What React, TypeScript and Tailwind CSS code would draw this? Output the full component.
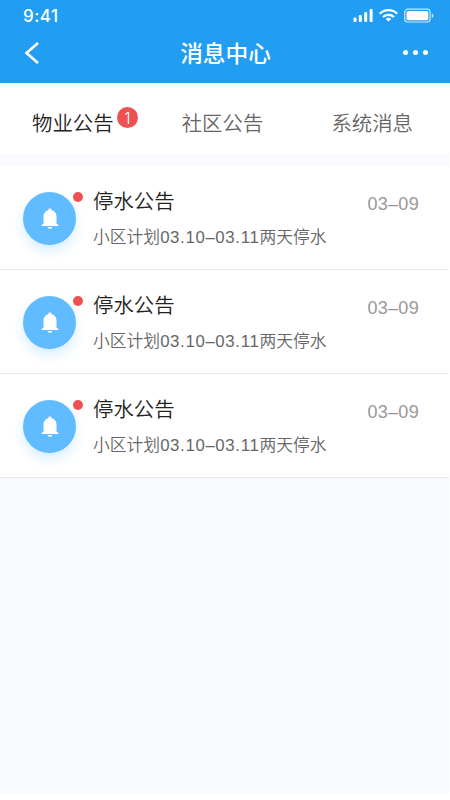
import { useState } from 'react';

const tabs = [
  { label: '物业公告', count: 1 },
  { label: '社区公告', count: 0 },
  { label: '系统消息', count: 0 }
];

const notices = [
  { id: 1, title: '停水公告', place: '小区计划', range: '03.10–03.11', rest: '两天停水', date: '03–09' },
  { id: 2, title: '停水公告', place: '小区计划', range: '03.10–03.11', rest: '两天停水', date: '03–09' },
  { id: 3, title: '停水公告', place: '小区计划', range: '03.10–03.11', rest: '两天停水', date: '03–09' }
];

function StatusIcons() {
  return (
    <svg width="82" height="16" viewBox="0 0 82 16" fill="white">
      <rect x="0.5" y="9.5" width="3" height="4.5" rx="1" />
      <rect x="5.8" y="7" width="3" height="7" rx="1" />
      <rect x="11.2" y="4" width="3" height="10" rx="1" />
      <rect x="16.6" y="1" width="3" height="13" rx="1" />
      <g fill="none" stroke="white" strokeWidth="2.1">
        <path d="M26.8 5.7a12.4 12.4 0 0 1 17.4 0" />
        <path d="M30 9.1a8 8 0 0 1 11 0" />
      </g>
      <path d="M35.5 13.6l-2.8-2.7a4.2 4.2 0 0 1 5.6 0z" />
      <rect x="51.7" y="1.2" width="25.4" height="12.8" rx="3" fill="none" stroke="white" strokeOpacity="0.75" strokeWidth="1.2" />
      <rect x="53.5" y="3" width="21.8" height="9.2" rx="1.6" />
      <path d="M78.8 5.4c2.2 1 2.2 3.5 0 4.5z" fillOpacity="0.8" />
    </svg>
  );
}

function BellIcon() {
  return (
    <svg width="18" height="22" viewBox="0 0 18 22" fill="white">
      <path d="M9 0.6c-1.1 0-1.7.7-1.7 1.6C4.200 3 2.500 5.300 2.500 8.400v6.700c0 1-.4 1.200-1.500 1.500-.5.2-.5 1.300.2 1.300h15.600c.7 0 .7-1.100.2-1.300-1.100-.3-1.500-.5-1.500-1.500V8.400c0-3.100-1.700-5.400-4.800-6.200 0-.9-.6-1.600-1.700-1.600z" />
      <path d="M6.500 18.900h5c-.4 1.200-1.300 1.800-2.500 1.800s-2.100-.6-2.500-1.800z" />
    </svg>
  );
}

export default function App() {
  const [active, setActive] = useState(0);

  return (
    <div className="h-[800px] w-[450px] overflow-hidden bg-white font-['Liberation_Sans','Noto_Sans_CJK_SC',sans-serif] font-[350]">
      <div className="mr-px flex h-[793px] flex-col bg-[#f8faff]">
        <header className="-mr-px h-[83px] shrink-0 bg-[#219df2] text-white">
          <div className="flex h-[31px] items-center justify-between pr-[15px] pl-[23px]">
            <span className="pt-px font-['Inter',sans-serif] text-[17px] leading-none font-medium tracking-[0.500px]">9:41</span>
            <StatusIcons />
          </div>
          <div className="flex h-[44px] items-center justify-between pr-[22px] pl-6">
            <button type="button" aria-label="返回" className="w-[26px]">
              <svg width="16" height="24" viewBox="0 0 16 24" fill="none" stroke="white" strokeWidth="2.6">
                <path d="M14 2L2.500 12l11.500 10" />
              </svg>
            </button>
            <h1 className="-ml-[2px] pt-[2px] text-[22.700px] leading-none font-medium">消息中心</h1>
            <button type="button" aria-label="更多" className="-mt-[2px] flex w-[25px] justify-between">
              <span className="size-[5px] rounded-full bg-white" />
              <span className="size-[5px] rounded-full bg-white" />
              <span className="size-[5px] rounded-full bg-white" />
            </button>
          </div>
        </header>

        <nav className="flex h-[71px] shrink-0 justify-between bg-white pt-[26px] pr-9 pl-8">
          {tabs.map((tab, index) => (
            <button
              key={tab.label}
              type="button"
              onClick={() => setActive(index)}
              className={`relative h-[30px] text-[20.400px] leading-[30px] ${active === index ? 'text-[#222]' : 'text-[#666]'}`}
            >
              {tab.label}
              {tab.count > 0 && (
                <span className="absolute -top-[2px] left-[85px] flex size-[21px] items-center justify-center rounded-full bg-[#ec5250] font-['Inter',sans-serif] text-[16px] text-white">
                  {tab.count}
                </span>
              )}
            </button>
          ))}
        </nav>

        <ul className="mt-[12px] bg-white">
          {notices.map((notice) => (
            <li key={notice.id} className="flex h-[104px] border-b border-[#e8e8ea] pr-[30px] pl-[23px]">
              <div className="relative mt-[26px] flex size-[53px] items-center justify-center rounded-full bg-[#61bbff] shadow-[0_6px_12px_rgba(97,187,255,0.25)]">
                <BellIcon />
                <span className="absolute top-0 -right-[7px] size-[10px] rounded-full bg-[#ec5250]" />
              </div>
              <div className="ml-[17px] flex-1 pt-[21px]">
                <div className="text-[20.400px] leading-[30px] text-[#222]">{notice.title}</div>
                <div className="mt-[8px] text-[16.800px] leading-[26px] whitespace-nowrap text-[#666]">
                  {notice.place}
                  <span className="tracking-[0.650px]">{notice.range}</span>
                  {notice.rest}
                </div>
              </div>
              <div className="pt-[25px] text-[18px] leading-[26px] tracking-[0.300px] text-[#999]">{notice.date}</div>
            </li>
          ))}
        </ul>
      </div>
    </div>
  );
}
